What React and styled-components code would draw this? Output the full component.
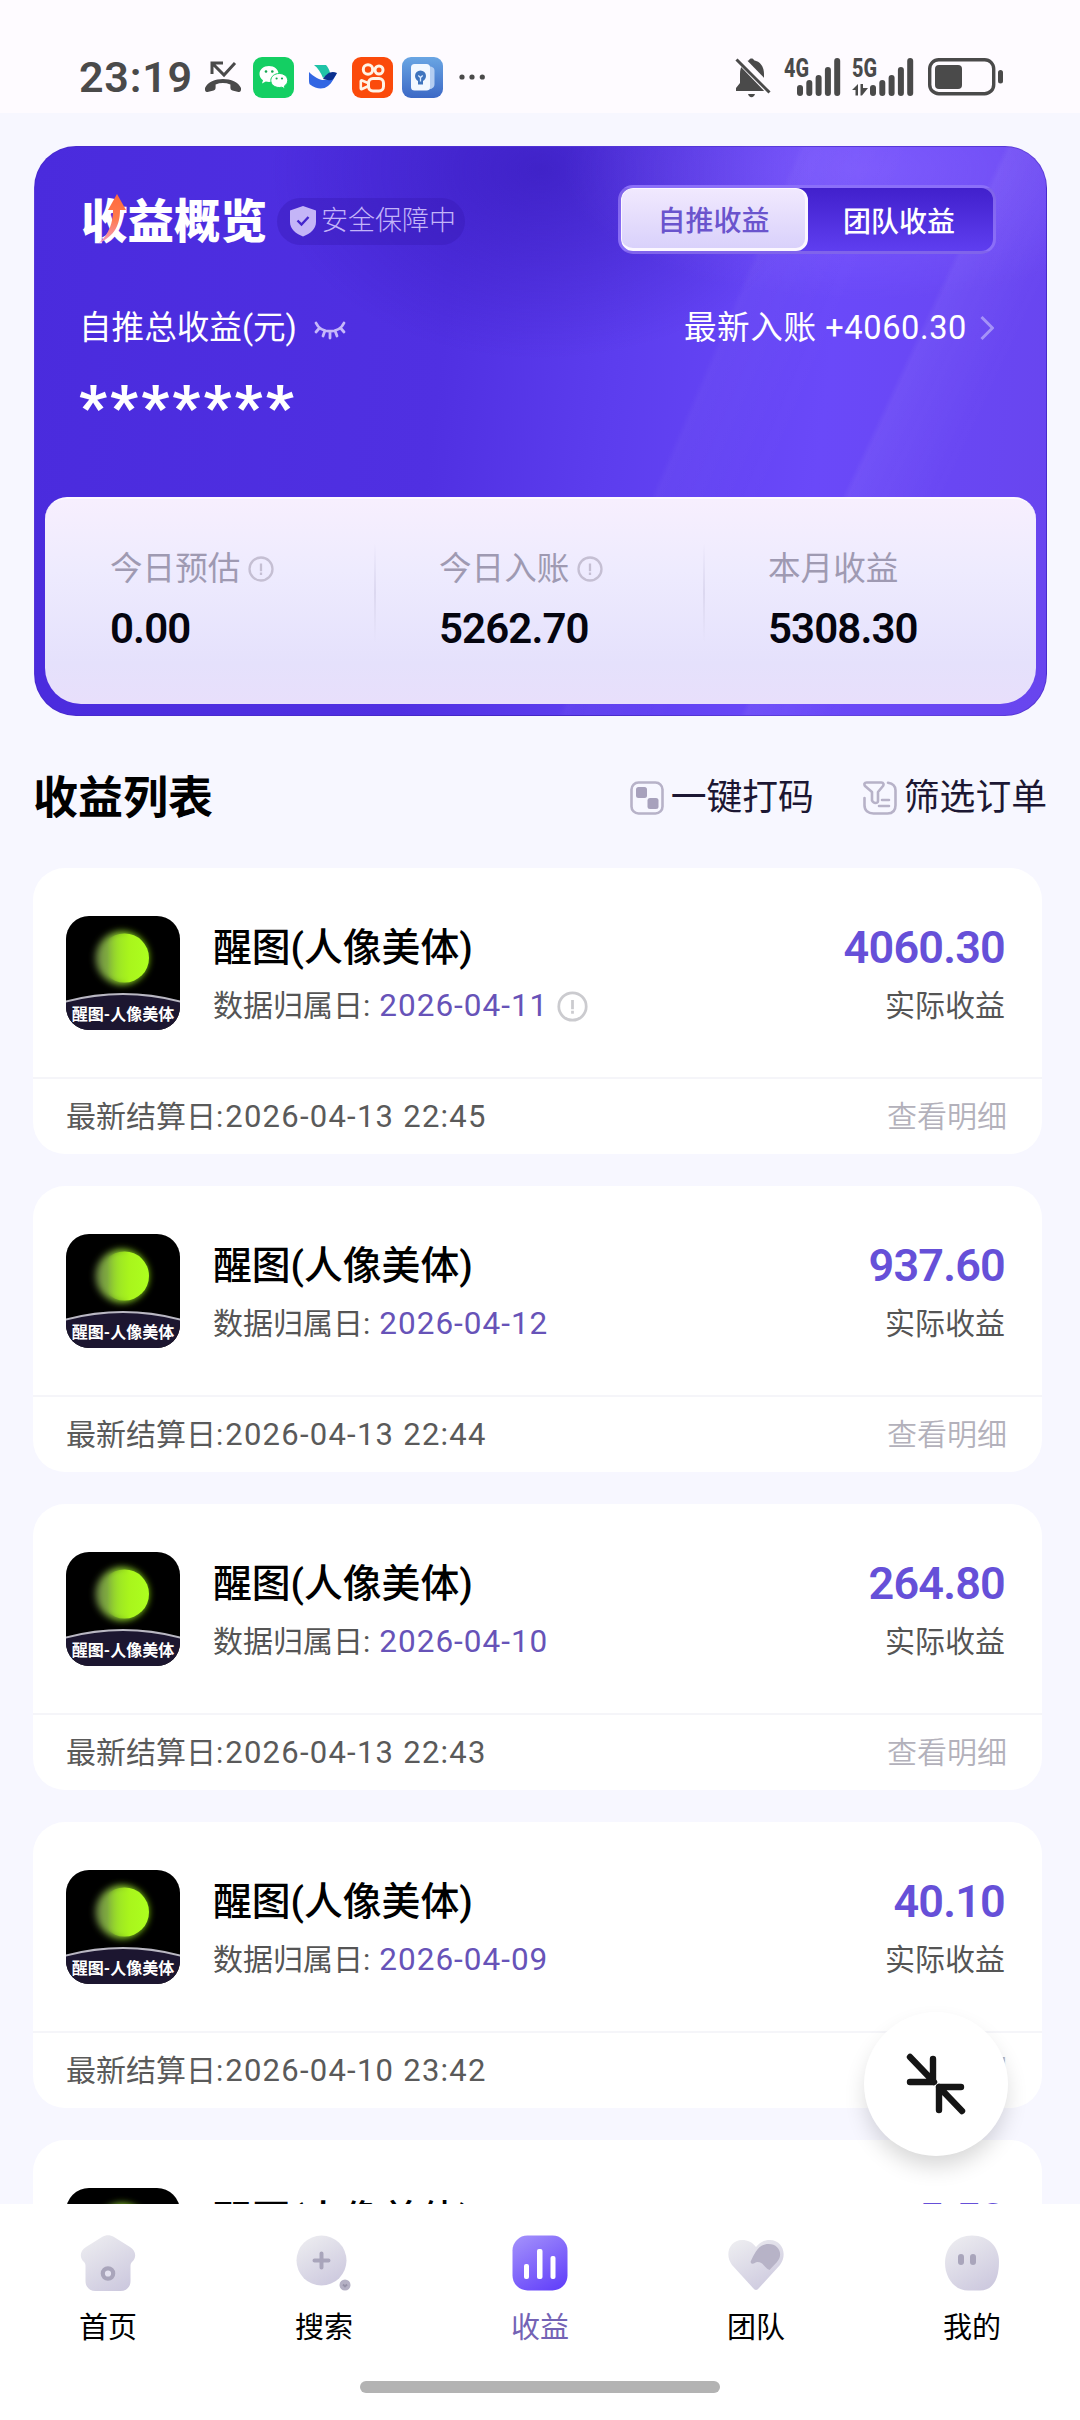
import React from 'react';
import styled, { createGlobalStyle } from 'styled-components';

const GlobalStyle = createGlobalStyle`
  * {
    box-sizing: border-box;
  }

  body {
    margin: 0;
    background: #f6f6ff;
    font-family: Roboto, 'Noto Sans CJK SC', sans-serif;
    color: #000;
  }

  svg {
    display: block;
    flex-shrink: 0;
  }
`;

const Screen = styled.div`
  position: relative;
  display: flex;
  flex-direction: column;
  width: 1080px;
  height: 2420px;
  overflow: hidden;
  background: #f7f7ff;
`;

/* ---------- status bar ---------- */

const StatusBar = styled.header`
  display: flex;
  justify-content: space-between;
  height: 113px;
  padding: 52px 76px 10px 79px;
  background: #fefbff;
`;

const StatusGroup = styled.div`
  display: flex;
  align-items: center;
  height: 50px;
`;

const Clock = styled.span`
  width: 125px;
  font-size: 43px;
  font-weight: 600;
  letter-spacing: 0.8px;
  line-height: 48px;
  color: #4a4a4a;
`;

/* ---------- summary ---------- */

const Summary = styled.section`
  display: flex;
  flex-direction: column;
  flex-shrink: 0;
  width: 1013px;
  height: 570px;
  margin: 33px 0 0 34px;
  padding: 0 11px 11px;
  border-radius: 42px;
  border: 1px solid rgba(70, 40, 190, 0.5);
  background:
    linear-gradient(115deg, transparent 76%, rgba(255, 255, 255, 0.05) 76.5%, transparent 84%),
    linear-gradient(113deg, transparent 61%, rgba(255, 255, 255, 0.03) 61.5%, transparent 70%),
    radial-gradient(ellipse 300px 130px at 82% 4%, rgba(140, 105, 255, 0.55), transparent),
    radial-gradient(ellipse 270px 190px at 50% 4%, rgba(50, 22, 180, 0.6), transparent),
    linear-gradient(97deg, #4a2bdd 0%, #5030e2 40%, #5c3dee 56%, #6a49f9 76%, #6845ee 100%);
`;

const SummaryTop = styled.div`
  display: flex;
  align-items: center;
  height: 69px;
  margin: 38px 39px 0 35px;
`;

const Heading = styled.h1`
  position: relative;
  width: 186px;
  margin: 4px 10px 0 0;
  font-size: 46.5px;
  font-weight: 900;
  line-height: 60px;
  color: #fff;
  white-space: nowrap;
`;

const TrendArrow = styled.svg`
  position: absolute;
  left: 17px;
  top: 1px;
`;

const SafeBadge = styled.div`
  display: flex;
  align-items: center;
  gap: 4px;
  width: 188px;
  height: 47px;
  margin-top: 3px;
  padding-left: 12px;
  border-radius: 24px;
  background: rgba(55, 25, 180, 0.4);
  font-size: 27px;
  font-weight: 300;
  line-height: 47px;
  color: #c3b4f9;
  white-space: nowrap;
`;

const Segmented = styled.div`
  display: flex;
  width: 378px;
  height: 69px;
  margin-left: auto;
  border: 3px solid rgba(170, 145, 255, 0.6);
  border-radius: 15px;
  background: linear-gradient(#4120cc, #5f3ef0);
`;

const Segment = styled.button`
  flex: ${({ $active }) => ($active ? '0 0 187px' : '0 0 182px')};
  padding: 0;
  border: ${({ $active }) => ($active ? '3px solid #fbf7ff' : '0')};
  border-width: ${({ $active }) => ($active ? '1px 3px 3px 1px' : '0')};
  border-radius: 12px;
  background: ${({ $active }) => ($active ? 'linear-gradient(#f1e9fe, #d9d1fb)' : 'none')};
  font: inherit;
  font-size: 28px;
  font-weight: 500;
  color: ${({ $active }) => ($active ? '#6a54cd' : '#fff')};
`;

const SummaryRow = styled.div`
  display: flex;
  align-items: center;
  height: 44px;
  margin: 52px 41px 0 33px;
  font-size: 32.6px;
  line-height: 44px;
  color: #fff;
`;

const LatestIncome = styled.span`
  display: flex;
  align-items: center;
  gap: 13px;
  margin-left: auto;
  letter-spacing: 0.6px;
`;

const MaskedTotal = styled.div`
  height: 60px;
  margin: 19px 0 0 33px;
  font-size: 60px;
  font-weight: 900;
  letter-spacing: 3.2px;
  line-height: 76px;
  color: #fff;
`;

const StatPanel = styled.div`
  display: flex;
  height: 207px;
  margin-top: auto;
  margin-left: -1px;
  margin-right: -1px;
  border-radius: 22px 22px 36px 36px;
  border-top: 2px solid #fdf9ff;
  background: linear-gradient(#f7effe 0%, #eeebfe 35%, #e5e1fc 80%, #e8dffb 100%);
`;

const Stat = styled.div`
  position: relative;
  flex: 0 0 329px;
  padding: 47px 0 0 65px;

  & + &::before {
    content: '';
    position: absolute;
    left: 0;
    top: 44px;
    width: 2px;
    height: 100px;
    background: linear-gradient(transparent, #dcd8f0, transparent);
  }
`;

const StatLabel = styled.div`
  display: flex;
  align-items: center;
  gap: 8px;
  height: 46px;
  font-size: 32.6px;
  line-height: 46px;
  color: #9f9ab2;
`;

const StatValue = styled.div`
  margin-top: 12px;
  font-size: 42px;
  font-weight: 600;
  letter-spacing: -0.9px;
  line-height: 50px;
  color: #05050f;
`;

/* ---------- income list ---------- */

const ListHeader = styled.div`
  display: flex;
  align-items: center;
  flex-shrink: 0;
  height: 60px;
  margin: 52px 33px 0 33px;
`;

const ListTitle = styled.h2`
  margin: 2px auto 0 0;
  font-size: 45px;
  font-weight: 600;
  line-height: 60px;
`;

const ListAction = styled.button`
  display: flex;
  align-items: center;
  gap: 7px;
  margin-left: 49px;
  padding: 0;
  border: 0;
  background: none;
  font: inherit;
  font-size: 35.8px;
  line-height: 60px;
  color: #1c1733;
`;

const List = styled.main`
  display: flex;
  flex: 1;
  flex-direction: column;
  gap: 32px;
  min-height: 0;
  margin-top: 40px;
  padding-left: 33px;
  overflow: hidden;
`;

const Card = styled.article`
  flex-shrink: 0;
  width: 1009px;
  height: 286px;
  border-radius: 32px;
  background: #fff;
`;

const CardBody = styled.div`
  display: flex;
  height: 211px;
  padding: 48px 37px 0 33px;
  border-bottom: 2px solid #f5f5f9;
`;

const AppIcon = styled.div`
  position: relative;
  width: 114px;
  height: 114px;
  margin-right: 33px;
  border-radius: 23px;
  background: #000;
  overflow: hidden;
`;

const AppIconLabel = styled.span`
  position: absolute;
  left: 0;
  right: 0;
  bottom: 3px;
  font-size: 16px;
  font-weight: 700;
  line-height: 24px;
  text-align: center;
  white-space: nowrap;
  color: #fff;
`;

const CardText = styled.div`
  display: flex;
  flex: 1;
  flex-direction: column;
  align-items: ${({ $end }) => ($end ? 'flex-end' : 'flex-start')};
`;

const AppName = styled.div`
  margin-top: 5px;
  font-size: 38.8px;
  font-weight: 500;
  line-height: 54px;
  white-space: nowrap;
`;

const Amount = styled.div`
  margin-top: 5px;
  font-size: 45px;
  font-weight: 600;
  letter-spacing: -0.8px;
  line-height: 54px;
  color: #6650d8;
`;

const Meta = styled.div`
  display: flex;
  align-items: center;
  margin-top: 10px;
  font-size: 30px;
  line-height: 42px;
  color: #555;
  white-space: nowrap;
`;

const DateText = styled.span`
  margin: 0 9px 0 9px;
  font-size: 31.5px;
  letter-spacing: 1px;
  color: #6753b8;
`;

const CardFooter = styled.div`
  display: flex;
  justify-content: space-between;
  align-items: center;
  height: 70px;
  padding: 0 35px 0 33px;
  font-size: 30px;
  color: #5a5a5a;
`;

const FooterDate = styled.span`
  margin-left: 2px;
  font-size: 31px;
  letter-spacing: 1.25px;
`;

const DetailLink = styled.a`
  font-weight: 350;
  color: #b3b1bb;
`;

/* ---------- floating button and tab bar ---------- */

const Fab = styled.button`
  position: absolute;
  left: 864px;
  top: 2012px;
  display: flex;
  align-items: center;
  justify-content: center;
  width: 144px;
  height: 144px;
  padding: 0;
  border: 0;
  border-radius: 50%;
  background: #fff;
  box-shadow: 0 12px 22px -2px rgba(0, 0, 0, 0.16);
`;

const TabBar = styled.nav`
  position: relative;
  flex-shrink: 0;
  height: 216px;
  background: #fff;
`;

const Tabs = styled.div`
  display: flex;
  height: 150px;
  padding-top: 31px;
`;

const Tab = styled.a`
  display: flex;
  flex: 1;
  flex-direction: column;
  align-items: center;
  gap: 15px;
  font-size: 29px;
  line-height: 44px;
  color: ${({ $active }) => ($active ? '#7463b5' : '#000')};
`;

const HomeIndicator = styled.div`
  width: 360px;
  height: 12px;
  margin: 27px auto 0;
  border-radius: 6px;
  background: #b3b3b3;
`;

/* ---------- icons ---------- */

const MissedCallIcon = () => (
  <svg width="38" height="34" viewBox="0 0 38 34">
    <path d="M8 15V4h11M8 4l12 12L31 4" transform="translate(0 -1)" fill="none" stroke="#4a4a4a" strokeWidth="3" />
    <path d="M1 28c5-12 31-12 36 0 .4 3-.8 4.500-2.600 4l-6-1.600c-1.500-.5-2-1.500-2-3v-3c-5-1.800-10-1.800-14.800 0v3c0 1.500-.6 2.500-2 3l-6 1.600C1.800 32.500.6 31 1 28z" fill="#4a4a4a" />
  </svg>
);

const WechatIcon = () => (
  <svg width="41" height="41" viewBox="0 0 41 41">
    <rect width="41" height="41" rx="9" fill="#14cf63" />
    <path d="M16 9C10.500 9 6.500 12.500 6.500 17c0 2.600 1.300 4.800 3.500 6.300L9 26.500l3.800-2c1 .3 2.100.4 3.200.4 5.400 0 9.500-3.500 9.500-8S21.400 9 16 9z" fill="#fff" />
    <path d="M26.300 16.500c-4.800 0-8.500 3-8.500 7s3.700 7 8.500 7c.9 0 1.800-.1 2.600-.3l3.300 1.800-.9-2.900c2-1.300 3.400-3.300 3.400-5.600 0-4-3.700-7-8.400-7z" fill="#fff" stroke="#14cf63" strokeWidth="1" />
    <g fill="#14a651">
      <circle cx="13" cy="14.500" r="1.300" />
      <circle cx="19.300" cy="14.500" r="1.300" />
      <circle cx="23.600" cy="21.500" r="1.100" />
      <circle cx="29" cy="21.500" r="1.100" />
    </g>
  </svg>
);

const BirdIcon = () => (
  <svg width="30" height="26" viewBox="0 0 30 26">
    <path d="M6 1h12c2 2 3.500 5 4 8l-7 5C13 9 10 4 6 1z" fill="#1fc3a7" />
    <path d="M1 8c5 5 11 8.500 16 8 4-.5 6-4 12-7-3 5-5 10-9 13-5 4-12 3-18-1.500C.8 19.500 1 16 1 8z" fill="#3266e3" />
    <path d="M29 9c-6-2.500-10.500.5-14 6 4 1.500 8 1.500 10 .2 1.500-2 2.500-4 4-6.200z" fill="#0b2f8e" />
  </svg>
);

const KuaishouIcon = () => (
  <svg width="41" height="41" viewBox="0 0 41 41">
    <rect width="41" height="41" rx="9" fill="#fb4a0b" />
    <g fill="none" stroke="#fff3e6" strokeWidth="3">
      <circle cx="16" cy="12.500" r="4.700" />
      <circle cx="27" cy="13" r="4" />
      <rect x="16.500" y="21.500" width="15" height="12.500" rx="4.500" />
      <path d="M16 26l-6-2.500c-.8-.3-1.200 0-1.200.8v7c0 .8.500 1 1.200.7l6-2.700" strokeWidth="2.600" />
    </g>
  </svg>
);

const TipsIcon = () => (
  <svg width="41" height="41" viewBox="0 0 41 41">
    <defs>
      <linearGradient id="tips" x1="0" y1="0" x2="0" y2="1">
        <stop offset="0" stopColor="#6aa6e3" />
        <stop offset="1" stopColor="#3c68c6" />
      </linearGradient>
    </defs>
    <rect width="41" height="41" rx="9" fill="url(#tips)" />
    <path d="M27 9c4 1 5.500 2 5.500 5v13c0 3-1.500 4.500-5.500 5.500z" fill="#b4cdf1" />
    <rect x="9" y="7" width="19" height="26.500" rx="3.500" fill="#f3f8ff" />
    <circle cx="18.500" cy="19" r="5.500" fill="#3f74bd" />
    <path d="M16 23h5v4.500h-5z" fill="#3f74bd" />
    <path d="M16.300 18.500l2.200 2 2.200-2M18.500 20.500v4" fill="none" stroke="#dcebff" strokeWidth="1.300" />
  </svg>
);

const MoreDots = () => (
  <svg width="26" height="6" viewBox="0 0 26 6" fill="#4a4a4a">
    <circle cx="3" cy="3" r="2.600" />
    <circle cx="13" cy="3" r="2.600" />
    <circle cx="23.300" cy="3" r="2.600" />
  </svg>
);

const MutedBellIcon = () => (
  <svg width="36" height="41" viewBox="0 0 36 41">
    <path d="M1 34v-3l4-5V17C5 9 9 4.500 14 3.200 14.500 1 18.500 1 19 3.200 25 4.500 29 9 29 17v9l4 5v3z" fill="#4a4a4a" />
    <path d="M13 37h7c-.5 2-1.800 3.200-3.500 3.200S13.500 39 13 37z" fill="#4a4a4a" />
    <path d="M3 .5l34 35" stroke="#fefbff" strokeWidth="9" />
    <path d="M1.500 2.500l33 33" stroke="#4a4a4a" strokeWidth="3" />
  </svg>
);

const SIGNAL_BARS = [11, 16, 21, 29, 38];

const Signal = ({ label, data }) => {
  const start = data ? 18 : 13;
  return (
    <svg width={start + 45} height="57" viewBox={`0 -8 ${start + 45} 57`} fill="#4a4a4a">
      <text x="0" y="19.500" fontSize="26" fontWeight="800" textLength="25" lengthAdjust="spacingAndGlyphs">{label}</text>
      {data && <path d="M0 33l6-6v11.500H3.500V33zM8.500 27H11v4h5l-6 7.500H8.500z" />}
      {SIGNAL_BARS.map((height, i) => (
        <rect key={height} x={start + i * 9.3} y={39 - height} width="6" height={height} rx="3" />
      ))}
    </svg>
  );
};

const BatteryIcon = () => (
  <svg width="76" height="40" viewBox="0 0 76 40">
    <rect x="1.700" y="2.700" width="64" height="34" rx="9" fill="none" stroke="#4a4a4a" strokeWidth="3.400" />
    <rect x="7" y="8" width="27" height="24" rx="4" fill="#4a4a4a" />
    <rect x="70" y="13" width="5" height="13.500" rx="2.500" fill="#4a4a4a" />
  </svg>
);

const ShieldIcon = () => (
  <svg width="28" height="32" viewBox="0 0 28 32">
    <path d="M14 1l13 4.500V17c0 7-5.500 11.500-13 14.500C6.500 28.500 1 24 1 17V5.500z" fill="#c4b5f7" />
    <path d="M8.500 15.500l4 4 7-7.500" fill="none" stroke="#4325cc" strokeWidth="2.400" />
  </svg>
);

const ClosedEyeIcon = styled(({ className }) => (
  <svg className={className} width="32" height="20" viewBox="0 0 32 20" fill="none" stroke="#c6b8fa" strokeWidth="2.800" strokeLinecap="round">
    <path d="M2 2c5 11 23 11 28 0M5.500 7L2 11M11 9.500L9 15M16 10.500V17M21 9.500l2 5.500M26.500 7l3.500 4" />
  </svg>
))`
  margin: 6px 0 0 17px;
`;

const ChevronIcon = () => (
  <svg width="14" height="26" viewBox="0 0 14 26" fill="none" stroke="#a592f8" strokeWidth="3">
    <path d="M1.500 2l11 11-11 11" />
  </svg>
);

const InfoIcon = ({ size, color }) => (
  <svg width={size} height={size} viewBox="0 0 26 26" fill="none" stroke={color} strokeWidth="2.300">
    <circle cx="13" cy="13" r="11.500" />
    <path d="M13 7.500v7.800M13 16.500v2.500" />
  </svg>
);

const MosaicIcon = () => (
  <svg width="34" height="34" viewBox="0 0 34 34">
    <rect x="1.500" y="1.500" width="31" height="31" rx="7" fill="none" stroke="#b7b2c8" strokeWidth="2.600" />
    <rect x="6" y="6" width="11" height="11" rx="2.500" fill="#a7a1bc" />
    <rect x="17.500" y="17" width="11" height="11" rx="2.500" fill="#a7a1bc" />
  </svg>
);

const FilterIcon = () => (
  <svg width="34" height="34" viewBox="0 0 34 34" fill="none" stroke="#b7b2c8" strokeWidth="2.600" strokeLinecap="round" strokeLinejoin="round">
    <path d="M3.500 1.500h15c2 0 2.500 2 1.500 3.500l-5 6v9c0 2.500-4.500 2.800-6-.5v-8.500L2 5c-1.200-1.800-.5-3.500 1.500-3.500z" />
    <path d="M25 1.800c5 .8 7.500 3 7.500 7.500v15c0 5.500-3 8.200-8 8.200h-14c-5.500 0-9-3-9-8.200V17" />
    <path d="M19 19h7M16 25h10" />
  </svg>
);

const MoonArt = () => (
  <svg width="114" height="114" viewBox="0 0 114 114">
    <defs>
      <linearGradient id="moonSoft" x1="0" x2="1">
        <stop offset="0" stopColor="#7f9c55" stopOpacity="0.85" />
        <stop offset="0.45" stopColor="#93d630" />
        <stop offset="1" stopColor="#8ade10" />
      </linearGradient>
      <linearGradient id="moonLit" x1="0" x2="1">
        <stop offset="0.15" stopColor="#a9f51c" stopOpacity="0" />
        <stop offset="0.6" stopColor="#a9f51c" />
        <stop offset="1" stopColor="#adff1f" />
      </linearGradient>
      <filter id="glow" x="-50%" y="-50%" width="200%" height="200%">
        <feGaussianBlur stdDeviation="3.500" />
      </filter>
    </defs>
    <circle cx="56" cy="42" r="26.500" fill="url(#moonSoft)" filter="url(#glow)" />
    <circle cx="58.500" cy="42" r="24.500" fill="url(#moonLit)" />
    <path d="M-2 86Q57 70 116 86V116H-2z" fill="#1c1630" stroke="#b9b7c2" strokeWidth="2" />
  </svg>
);

const CollapseIcon = () => (
  <svg width="60" height="62" viewBox="0 0 60 62" fill="none" stroke="#151515" strokeWidth="6.400" strokeLinecap="round" strokeLinejoin="round">
    <path d="M4 4l24 25M27 6v23H4" />
    <path d="M56 58L33 34M33 57V34h22" />
  </svg>
);

const TabGradient = () => (
  <svg width="0" height="0" style={{ position: 'absolute' }}>
    <defs>
      <linearGradient id="tabIdle" x1="0.2" y1="0" x2="0.8" y2="1">
        <stop offset="0" stopColor="#ececf0" />
        <stop offset="1" stopColor="#ccc8de" />
      </linearGradient>
      <linearGradient id="tabActive" x1="0.2" y1="0" x2="0.8" y2="1">
        <stop offset="0" stopColor="#a08dfb" />
        <stop offset="1" stopColor="#6341fa" />
      </linearGradient>
    </defs>
  </svg>
);

const tabArt = {
  home: (
    <>
      <path d="M22 2c4-2.500 8-2.500 12 0l16 10c6 4 7 10 2 15-1 1-1.500 2-1.500 4v15c0 6-4 10-10 10h-25c-6 0-10-4-10-10V31c0-2-.5-3-1.500-4-5-5-4-11 2-15z" fill="url(#tabIdle)" />
      <circle cx="28" cy="38.500" r="5.200" fill="#e4e2f0" stroke="#a9a5bb" strokeWidth="4.200" />
    </>
  ),
  search: (
    <>
      <circle cx="25.500" cy="25.500" r="25" fill="url(#tabIdle)" />
      <path d="M25.500 18.500v14M18.500 25.500h14" stroke="#a9a5bb" strokeWidth="4" strokeLinecap="round" />
      <circle cx="49" cy="50" r="5.500" fill="#b4b0c4" />
      <path d="M47 49.500l2 2 2-2" fill="none" stroke="#9692a8" strokeWidth="1.800" />
    </>
  ),
  income: (
    <>
      <rect x="0.500" y="0.500" width="55" height="55" rx="15" fill="url(#tabActive)" />
      <g fill="#fff">
        <rect x="12" y="29" width="5" height="15" rx="2" />
        <rect x="25" y="14" width="5.500" height="30" rx="2" />
        <rect x="38.500" y="21" width="5" height="23" rx="2" />
      </g>
    </>
  ),
  team: (
    <>
      <path d="M25 53L4 30C-4 19 2 5 14 5c6 0 10 2 14 7 4-5 8-7 14-7 12 0 18 14 10 25L31 53c-2 2.500-4 2.500-6 0z" fill="url(#tabIdle)" />
      <path d="M22.500 27c4-9 8-18 18-18 11 0 15 11 8.500 18l-7.500 8c-5-2-6-8-12-8-3 0-5 4-7 0z" fill="#b7b3c7" />
    </>
  ),
  mine: (
    <>
      <path d="M28 .5C45 .5 55 12 55 27c0 15-5 28.500-19 28.500H24C10 55.500 1 42 1 28 1 12 12 .5 28 .5z" fill="url(#tabIdle)" />
      <rect x="14" y="19" width="6" height="11" rx="3" fill="#a9a5bb" />
      <rect x="26" y="19" width="6" height="11" rx="3" fill="#a9a5bb" />
    </>
  ),
};

/* ---------- data ---------- */

const stats = [
  { label: '今日预估', value: '0.00', info: true },
  { label: '今日入账', value: '5262.70', info: true },
  { label: '本月收益', value: '5308.30' },
];

const records = [
  { amount: '4060.30', date: '2026-04-11', settled: '2026-04-13 22:45', info: true },
  { amount: '937.60', date: '2026-04-12', settled: '2026-04-13 22:44' },
  { amount: '264.80', date: '2026-04-10', settled: '2026-04-13 22:43' },
  { amount: '40.10', date: '2026-04-09', settled: '2026-04-10 23:42' },
  { amount: '5.50', date: '2026-04-08', settled: '2026-04-10 23:42' },
];

const tabs = [
  { key: 'home', label: '首页' },
  { key: 'search', label: '搜索' },
  { key: 'income', label: '收益', active: true },
  { key: 'team', label: '团队' },
  { key: 'mine', label: '我的' },
];

const AppIcons = styled(StatusGroup)`
  gap: 9px;
`;

const CallSlot = styled(StatusGroup)`
  margin-right: 2px;
`;

const BirdSlot = styled.span`
  display: flex;
  justify-content: center;
  width: 40px;
`;

const DotsSlot = styled.span`
  margin-left: 7px;
`;

const SystemIcons = styled(StatusGroup)`
  gap: 13px;
`;

const Signals = styled.span`
  display: flex;
  gap: 10px;
`;

const Record = ({ record }) => (
  <Card>
    <CardBody>
      <AppIcon>
        <MoonArt />
        <AppIconLabel>醒图-人像美体</AppIconLabel>
      </AppIcon>
      <CardText>
        <AppName>醒图(人像美体)</AppName>
        <Meta>
          数据归属日:
          <DateText>{record.date}</DateText>
          {record.info && <InfoIcon size={31} color="#cbcbcf" />}
        </Meta>
      </CardText>
      <CardText $end>
        <Amount>{record.amount}</Amount>
        <Meta>实际收益</Meta>
      </CardText>
    </CardBody>
    <CardFooter>
      <span>
        最新结算日:<FooterDate>{record.settled}</FooterDate>
      </span>
      <DetailLink>查看明细</DetailLink>
    </CardFooter>
  </Card>
);

const App = () => {
  return (
    <Screen>
      <GlobalStyle />
      <StatusBar>
        <AppIcons>
          <CallSlot>
            <Clock>23:19</Clock>
            <MissedCallIcon />
          </CallSlot>
          <WechatIcon />
          <BirdSlot>
            <BirdIcon />
          </BirdSlot>
          <KuaishouIcon />
          <TipsIcon />
          <DotsSlot>
            <MoreDots />
          </DotsSlot>
        </AppIcons>
        <SystemIcons>
          <MutedBellIcon />
          <Signals>
            <Signal label="4G" />
            <Signal label="5G" data />
          </Signals>
          <BatteryIcon />
        </SystemIcons>
      </StatusBar>

      <Summary>
        <SummaryTop>
          <Heading>
            收益概览
            <TrendArrow width="28" height="52" viewBox="0 0 28 52">
              <defs>
                <linearGradient id="trend" x1="0" y1="0" x2="0" y2="1">
                  <stop offset="0" stopColor="#ff6a3c" />
                  <stop offset="0.5" stopColor="#ff7a4c" />
                  <stop offset="1" stopColor="#f39ac0" />
                </linearGradient>
              </defs>
              <path d="M19 1l9 16h-6c0 14-5 26-21 33 10-9 14-20 14-33H10z" fill="url(#trend)" />
            </TrendArrow>
          </Heading>
          <SafeBadge>
            <ShieldIcon />
            安全保障中
          </SafeBadge>
          <Segmented>
            <Segment $active>自推收益</Segment>
            <Segment>团队收益</Segment>
          </Segmented>
        </SummaryTop>
        <SummaryRow>
          自推总收益(元)
          <ClosedEyeIcon />
          <LatestIncome>
            最新入账 +4060.30
            <ChevronIcon />
          </LatestIncome>
        </SummaryRow>
        <MaskedTotal>*******</MaskedTotal>
        <StatPanel>
          {stats.map(stat => (
            <Stat key={stat.label}>
              <StatLabel>
                {stat.label}
                {stat.info && <InfoIcon size={26} color="#c5bfd3" />}
              </StatLabel>
              <StatValue>{stat.value}</StatValue>
            </Stat>
          ))}
        </StatPanel>
      </Summary>

      <ListHeader>
        <ListTitle>收益列表</ListTitle>
        <ListAction>
          <MosaicIcon />
          一键打码
        </ListAction>
        <ListAction>
          <FilterIcon />
          筛选订单
        </ListAction>
      </ListHeader>

      <List>
        {records.map(record => (
          <Record key={record.date} record={record} />
        ))}
      </List>

      <TabBar>
        <TabGradient />
        <Tabs>
          {tabs.map(tab => (
            <Tab key={tab.key} $active={tab.active}>
              <svg width="56" height="56" viewBox="0 0 56 56">{tabArt[tab.key]}</svg>
              {tab.label}
            </Tab>
          ))}
        </Tabs>
        <HomeIndicator />
      </TabBar>

      <Fab>
        <CollapseIcon />
      </Fab>
    </Screen>
  );
};

export default App;
